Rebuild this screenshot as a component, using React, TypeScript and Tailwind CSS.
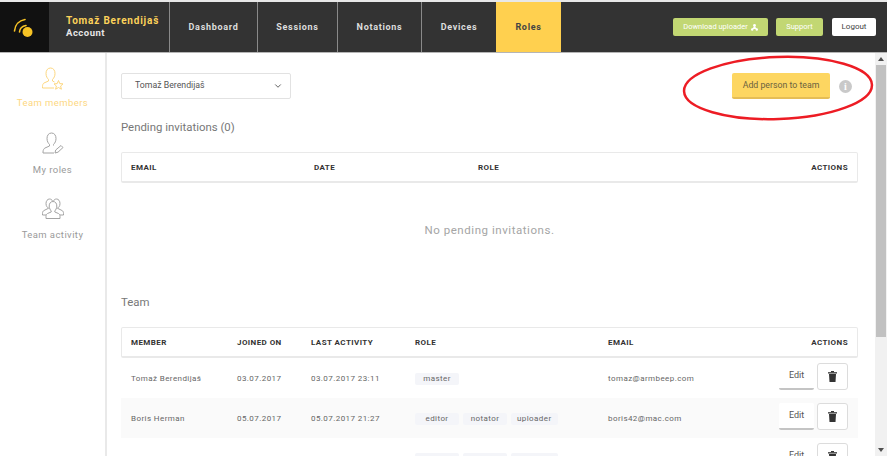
import React from "react";
import { ChevronDown } from "lucide-react";

const navItems = [
  { label: "Dashboard", width: "w-[88px]" },
  { label: "Sessions", width: "w-[80px]" },
  { label: "Notations", width: "w-[84px]" },
  { label: "Devices", width: "w-[75px]" },
];

const members = [
  {
    name: "Tomaž Berendijaš",
    joined: "03.07.2017",
    last: "03.07.2017 23:11",
    roles: ["master"],
    email: "tomaz@armbeep.com",
  },
  {
    name: "Boris Herman",
    joined: "05.07.2017",
    last: "05.07.2017 21:27",
    roles: ["editor", "notator", "uploader"],
    email: "boris42@mac.com",
  },
  {
    name: "Aleš Pilković",
    joined: "10.07.2017",
    last: "10.07.2017 18:24",
    roles: ["editor", "notator", "uploader"],
    email: "ales@mac.com",
  },
];

const LogoIcon = () => (
  <svg width="24" height="24" viewBox="0 0 24 24" fill="none">
    <circle cx="14.5" cy="17" r="5" fill="#f7c325" />
    <path d="M1.5 16 C2 10 6 5.5 12 4.5" stroke="#f7c325" strokeWidth="1.6" strokeLinecap="round" />
    <path d="M6.5 17 C6.5 14 9 11 13 10.5" stroke="#f7c325" strokeWidth="1.6" strokeLinecap="round" />
  </svg>
);

const PersonStarIcon = () => (
  <svg width="22" height="24" viewBox="0 0 22 24" fill="none" stroke="#fdd77f" strokeWidth="1">
    <path d="M8.5 1 C5.5 1 4 3.5 4 6.5 C4 9.5 5.5 11.5 6.5 12.5 L6.5 14 L2 16 C1 16.5 .5 18 .5 19.5 L.5 21 L12 21" />
    <path d="M8.5 1 C11.5 1 13 3.5 13 6.5 C13 9 12 11 10.5 12.5 L10.5 14 L12.5 15" />
    <path d="M16.5 13.5 L17.8 16.6 L21 16.9 L18.6 19 L19.4 22.2 L16.5 20.5 L13.6 22.2 L14.4 19 L12 16.9 L15.2 16.6 Z" />
  </svg>
);

const PersonPenIcon = () => (
  <svg width="22" height="24" viewBox="0 0 22 24" fill="none" stroke="#a3a3a3" strokeWidth="1">
    <path d="M9.5 1 C6.5 1 5 3.5 5 6.5 C5 9.5 6.5 11.5 7.5 12.5 L7.5 14 L3 16 C2 16.5 1 18 1 20 L1 21 L12 21" />
    <path d="M9.5 1 C12.5 1 14 3.5 14 6.5 C14 9 13 11 11.5 12.5 L11.5 13.5" />
    <path d="M13 21 L13.7 18 L19 13.5 L21 15.5 L16 20.2 Z" />
  </svg>
);

const GroupIcon = () => (
  <svg width="22" height="22" viewBox="0 0 22 22" fill="none" stroke="#a3a3a3" strokeWidth="1">
    <path d="M7 10.5 C5.5 9.5 4 8.5 4 5.5 C4 3 5.5 1 7.5 1 C9 1 10 1.8 10.5 3" />
    <path d="M15 10.5 C16.5 9.5 18 8.5 18 5.5 C18 3 16.5 1 14.5 1 C13 1 12 1.8 11.5 3" />
    <path d="M6 10.5 L2 12.5 C1 13 .5 14 .5 15.5 L.5 17 L4 17" />
    <path d="M16 10.5 L20 12.5 C21 13 21.5 14 21.5 15.5 L21.5 17 L18 17" />
    <path d="M11 3.5 C8.5 3.5 7.2 5.5 7.2 8 C7.2 10.5 8.5 12 9.2 13 L9.2 14 L5.5 15.5 C4.5 16 4 17 4 18.5 L4 20.5 L18 20.5 L18 18.5 C18 17 17.5 16 16.5 15.5 L12.8 14 L12.8 13 C13.5 12 14.8 10.5 14.8 8 C14.8 5.5 13.5 3.5 11 3.5 Z" />
  </svg>
);

const TrashIcon = () => (
  <svg width="9" height="11" viewBox="0 0 9 11" fill="#333">
    <rect x="0" y="1.2" width="9" height="1.3" />
    <rect x="3" y="0" width="3" height="1.2" />
    <path d="M1 3 H8 L7.5 11 H1.5 Z" />
  </svg>
);

const SidebarItem = ({
  icon,
  label,
  active,
}: {
  icon: React.ReactNode;
  label: string;
  active?: boolean;
}) => (
  <div className="flex h-[65px] flex-col items-center">
    <div className="flex h-[26px] items-center justify-center">{icon}</div>
    <span
      className={`text-[9.5px] leading-[12px] tracking-[0.42px] ${
        active ? "mt-[5px] text-[#fdd77f]" : "mt-[7px] text-[#9a9a9a]"
      }`}
    >
      {label}
    </span>
  </div>
);

const HeadCell = ({ children, className = "" }: { children: React.ReactNode; className?: string }) => (
  <span className={`text-[8px] font-bold tracking-[0.43px] text-[#333] ${className}`}>{children}</span>
);

const App = () => {
  return (
    <div className="h-[456px] w-[887px] overflow-hidden bg-white font-['Roboto',sans-serif]">
      <div className="h-[2px] bg-[#e8e8e8]" />
      <header className="flex h-[51px] border-b border-[#b5b5b5] bg-[#333333]">
        <div className="flex w-[49px] items-center justify-center bg-[#111111]">
          <LogoIcon />
        </div>
        <div className="flex w-[120px] flex-col justify-center pl-[17px] text-[10px] font-bold leading-[12px] tracking-[0.8px]">
          <span className="text-[#fdd25a]">Tomaž Berendijaš</span>
          <span className="text-[9.5px] tracking-[0.5px] text-[#e6e6e6]">Account</span>
        </div>
        {navItems.map((item) => (
          <div
            key={item.label}
            className={`flex ${item.width} items-center justify-center border-l border-[#8a8a8a] pt-[1px] text-[9px] font-bold tracking-[0.7px] text-[#dddddd]`}
          >
            {item.label}
          </div>
        ))}
        <div className="flex w-[65px] items-center justify-center bg-[#ffd04f] pt-[1px] text-[9px] font-bold tracking-[0.7px] text-[#444]">
          Roles
        </div>
        <div className="flex flex-1 items-center justify-end gap-[8px] pr-[11px]">
          <button className="flex h-[18px] w-[95px] items-center justify-center gap-[3px] rounded-[2px] bg-[#c2d773] text-[7.5px] text-white">
            Download uploader
            <svg width="7" height="7" viewBox="0 0 7 7" fill="#fff">
              <circle cx="3.5" cy="1.5" r="1.4" />
              <circle cx="1.2" cy="5.5" r="1.2" />
              <circle cx="5.8" cy="5.5" r="1.2" />
              <path d="M3 2.5 H4 L6 5 H1 Z" />
            </svg>
          </button>
          <button className="mr-[1px] flex h-[18px] w-[47px] items-center justify-center rounded-[2px] bg-[#c2d773] text-[7.5px] text-white">
            Support
          </button>
          <button className="flex h-[18px] w-[44px] items-center justify-center rounded-[2px] bg-white text-[8px] text-[#444]">
            Logout
          </button>
        </div>
      </header>

      <div className="flex h-[403px]">
        <aside className="flex w-[107px] shrink-0 flex-col border-r-2 border-[#e9e9e9] pt-[13px]">
          <SidebarItem icon={<PersonStarIcon />} label="Team members" active />
          <SidebarItem icon={<PersonPenIcon />} label="My roles" />
          <SidebarItem icon={<GroupIcon />} label="Team activity" />
        </aside>

        <main className="relative flex-1 overflow-hidden pl-[14px] pr-[17px] pt-[20px]">
          <div className="flex h-[26px] items-center justify-between">
            <div className="flex h-[26px] w-[170px] items-center justify-between rounded-[2px] border border-[#e2e2e2] pl-[13px] pr-[7px] text-[8.75px] text-[#555]">
              Tomaž Berendijaš
              <ChevronDown size={10} strokeWidth={2} color="#444" />
            </div>
            <div className="flex items-center gap-[9px] pr-[6px]">
              <button className="h-[26px] w-[98px] rounded-[2px] border-b-2 border-[#e5bd56] bg-[#fdd661] pt-[2px] text-[8.75px] text-[#6b6240]">
                Add person to team
              </button>
              <span className="flex h-[13px] w-[13px] items-center justify-center rounded-full bg-[#c9c9c9] font-['Liberation_Serif',serif] text-[10px] font-bold text-white">
                i
              </span>
            </div>
          </div>

          <h2 className="mt-[21px] text-[11.4px] leading-[14px] text-[#777]">Pending invitations (0)</h2>
          <div className="mt-[18px] grid h-[31px] grid-cols-[183px_164px_1fr_auto] items-center rounded-[2px] border border-b-2 border-[#e9e9e9] px-[9px] pt-[1px]">
            <HeadCell>EMAIL</HeadCell>
            <HeadCell>DATE</HeadCell>
            <HeadCell>ROLE</HeadCell>
            <HeadCell>ACTIONS</HeadCell>
          </div>
          <p className="mt-[40px] text-center text-[11.5px] leading-[14px] tracking-[0.55px] text-[#a5a5a5]">
            No pending invitations.
          </p>

          <h2 className="mt-[58px] text-[11.4px] leading-[14px] text-[#777]">Team</h2>
          <div className="mt-[18px] grid h-[31px] grid-cols-[106px_74px_104px_193px_1fr_auto] items-center rounded-[2px] border border-b-2 border-[#e9e9e9] px-[9px] pt-[1px]">
            <HeadCell>MEMBER</HeadCell>
            <HeadCell>JOINED ON</HeadCell>
            <HeadCell>LAST ACTIVITY</HeadCell>
            <HeadCell>ROLE</HeadCell>
            <HeadCell>EMAIL</HeadCell>
            <HeadCell>ACTIONS</HeadCell>
          </div>
          {members.map((member, index) => (
            <div
              key={member.name}
              className={`grid h-[40px] grid-cols-[106px_74px_104px_193px_1fr_auto] items-center pl-[10px] pr-[10px] pt-[1px] text-[8px] tracking-[0.42px] text-[#666] ${
                index === 1 ? "bg-[#fafafa]" : ""
              }`}
            >
              <span>{member.name}</span>
              <span>{member.joined}</span>
              <span>{member.last}</span>
              <div className="flex gap-[4px]">
                {member.roles.map((role) => (
                  <span
                    key={role}
                    className="flex h-[12px] min-w-[44px] items-center justify-center rounded-[2px] bg-[#f4f5f9] px-[6px] text-[8px]"
                  >
                    {role}
                  </span>
                ))}
              </div>
              <span>{member.email}</span>
              <div className="-mt-[4px] flex items-center gap-[3px]">
                <button className="h-[27px] w-[35px] rounded-[2px] border-b-2 border-[#c4c4c4] bg-white pt-[1px] text-[9px] tracking-normal text-[#555]">
                  Edit
                </button>
                <button className="flex h-[27px] w-[31px] items-center justify-center rounded-[3px] border border-[#dcdcdc] bg-white">
                  <TrashIcon />
                </button>
              </div>
            </div>
          ))}

          <svg
            className="pointer-events-none absolute left-[574px] top-[1px]"
            width="194"
            height="68"
            viewBox="0 0 194 68"
            fill="none"
          >
            <ellipse
              cx="97"
              cy="34"
              rx="94"
              ry="31"
              stroke="#ed1c24"
              strokeWidth="2.5"
              transform="rotate(-2 97 34)"
            />
          </svg>
        </main>

        <div className="flex w-[12px] shrink-0 flex-col bg-[#f1f1f1]">
          <div className="flex h-[12px] items-center justify-center">
            <div className="h-0 w-0 border-x-[3px] border-b-[4px] border-x-transparent border-b-[#505050]" />
          </div>
          <div className="mx-auto h-[272px] w-[10px] bg-[#c1c1c1]" />
          <div className="flex-1" />
          <div className="flex h-[12px] items-center justify-center">
            <div className="h-0 w-0 border-x-[3px] border-t-[4px] border-x-transparent border-t-[#505050]" />
          </div>
        </div>
      </div>
    </div>
  );
};

export default App;
